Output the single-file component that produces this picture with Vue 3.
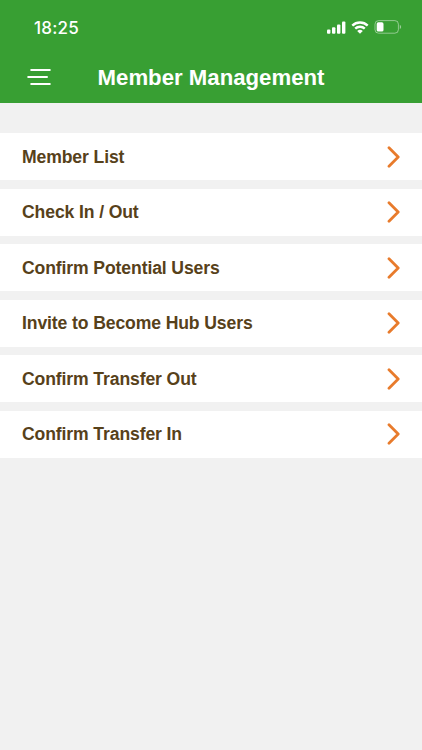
<script setup>
import { ref } from 'vue';

const time = ref('18:25');

const menuItems = [
  'Member List',
  'Check In / Out',
  'Confirm Potential Users',
  'Invite to Become Hub Users',
  'Confirm Transfer Out',
  'Confirm Transfer In',
];
</script>

<template>
  <main class="page">
    <header class="header">
      <div class="status-bar">
        <span class="time">{{ time }}</span>
        <div class="status-icons">
          <svg class="signal" width="19" height="13" viewBox="0 0 19 13">
            <rect x="0" y="8.5" width="3.4" height="4.3" rx="1" />
            <rect x="5" y="6.3" width="3.4" height="6.5" rx="1" />
            <rect x="10" y="3.5" width="3.4" height="9.3" rx="1" />
            <rect x="15" y="0.5" width="3.4" height="12.3" rx="1" />
          </svg>
          <svg class="wifi" width="18" height="13" viewBox="0 0 18 13">
            <path d="M1.3 4.6a11 11 0 0 1 15.4 0" />
            <path d="M4.2 7.7a6.9 6.9 0 0 1 9.6 0" />
            <path class="dot" d="M9 12.8 6.2 10a4 4 0 0 1 5.6 0z" />
          </svg>
          <svg class="battery" width="28" height="14" viewBox="0 0 28 14">
            <rect class="shell" x="1" y="0.6" width="23.4" height="12.6" rx="3.6" />
            <rect class="level" x="2.7" y="2.3" width="6.8" height="9.2" rx="1.6" />
            <path class="cap" d="M25.8 4.7c1.8.8 1.8 3.6 0 4.4z" />
          </svg>
        </div>
      </div>
      <div class="nav-bar">
        <svg class="menu-icon" width="24" height="18" viewBox="0 0 24 18">
          <path d="M4.2 2H22.8M1.2 9H20M4.2 16H22.8" />
        </svg>
        <h1>Member Management</h1>
      </div>
    </header>

    <ul class="menu">
      <li v-for="item in menuItems" :key="item">
        <span>{{ item }}</span>
        <svg class="arrow" width="14" height="22" viewBox="0 0 14 22">
          <path d="M2 1.8 11.2 11 2 20.2" />
        </svg>
      </li>
    </ul>
  </main>
</template>

<style>
body {
  margin: 0;
  background: #f1f1f1;
}
</style>

<style scoped>
.page {
  min-height: 100vh;
  background: #f1f1f1;
  font-family: "Liberation Sans", Arial, sans-serif;
}

.header {
  height: 103px;
  background: #389f33;
  color: white;
}

.status-bar {
  display: flex;
  align-items: center;
  justify-content: space-between;
  height: 54px;
  padding: 0 20px 0 34px;
}

.time {
  padding-top: 1px;
  font-family: Inter, sans-serif;
  font-size: 17px;
  font-weight: 500;
  line-height: 20px;
  letter-spacing: 0.2px;
}

.status-icons {
  display: flex;
  align-items: center;
  gap: 5px;
}

.signal {
  fill: white;
}

.wifi {
  fill: none;
  stroke: white;
  stroke-width: 2.4;
}

.wifi .dot {
  fill: white;
  stroke: none;
}

.shell {
  fill: none;
  stroke: white;
  stroke-opacity: 0.45;
}

.level {
  fill: white;
}

.cap {
  fill: white;
  fill-opacity: 0.5;
}

.nav-bar {
  display: grid;
  grid-template-columns: 1fr auto 1fr;
  align-items: center;
  height: 46px;
}

.menu-icon {
  margin-left: 27px;
  fill: none;
  stroke: white;
  stroke-width: 2;
  stroke-linecap: round;
}

h1 {
  margin: 0;
  padding-top: 2px;
  font-size: 22.2px;
  line-height: 26px;
}

.menu {
  display: flex;
  flex-direction: column;
  gap: 8.6px;
  margin: 0;
  padding: 30.4px 0 0;
  list-style: none;
}

.menu li {
  display: flex;
  align-items: center;
  justify-content: space-between;
  height: 46.9px;
  padding: 0 21px 0 22px;
  background: white;
  color: #57411a;
  font-size: 17.6px;
  font-weight: bold;
  letter-spacing: -0.12px;
}

.menu span {
  padding-top: 1px;
}

.arrow {
  fill: none;
  stroke: #e87b2c;
  stroke-width: 2.8;
  stroke-linecap: round;
  stroke-linejoin: round;
}
</style>
